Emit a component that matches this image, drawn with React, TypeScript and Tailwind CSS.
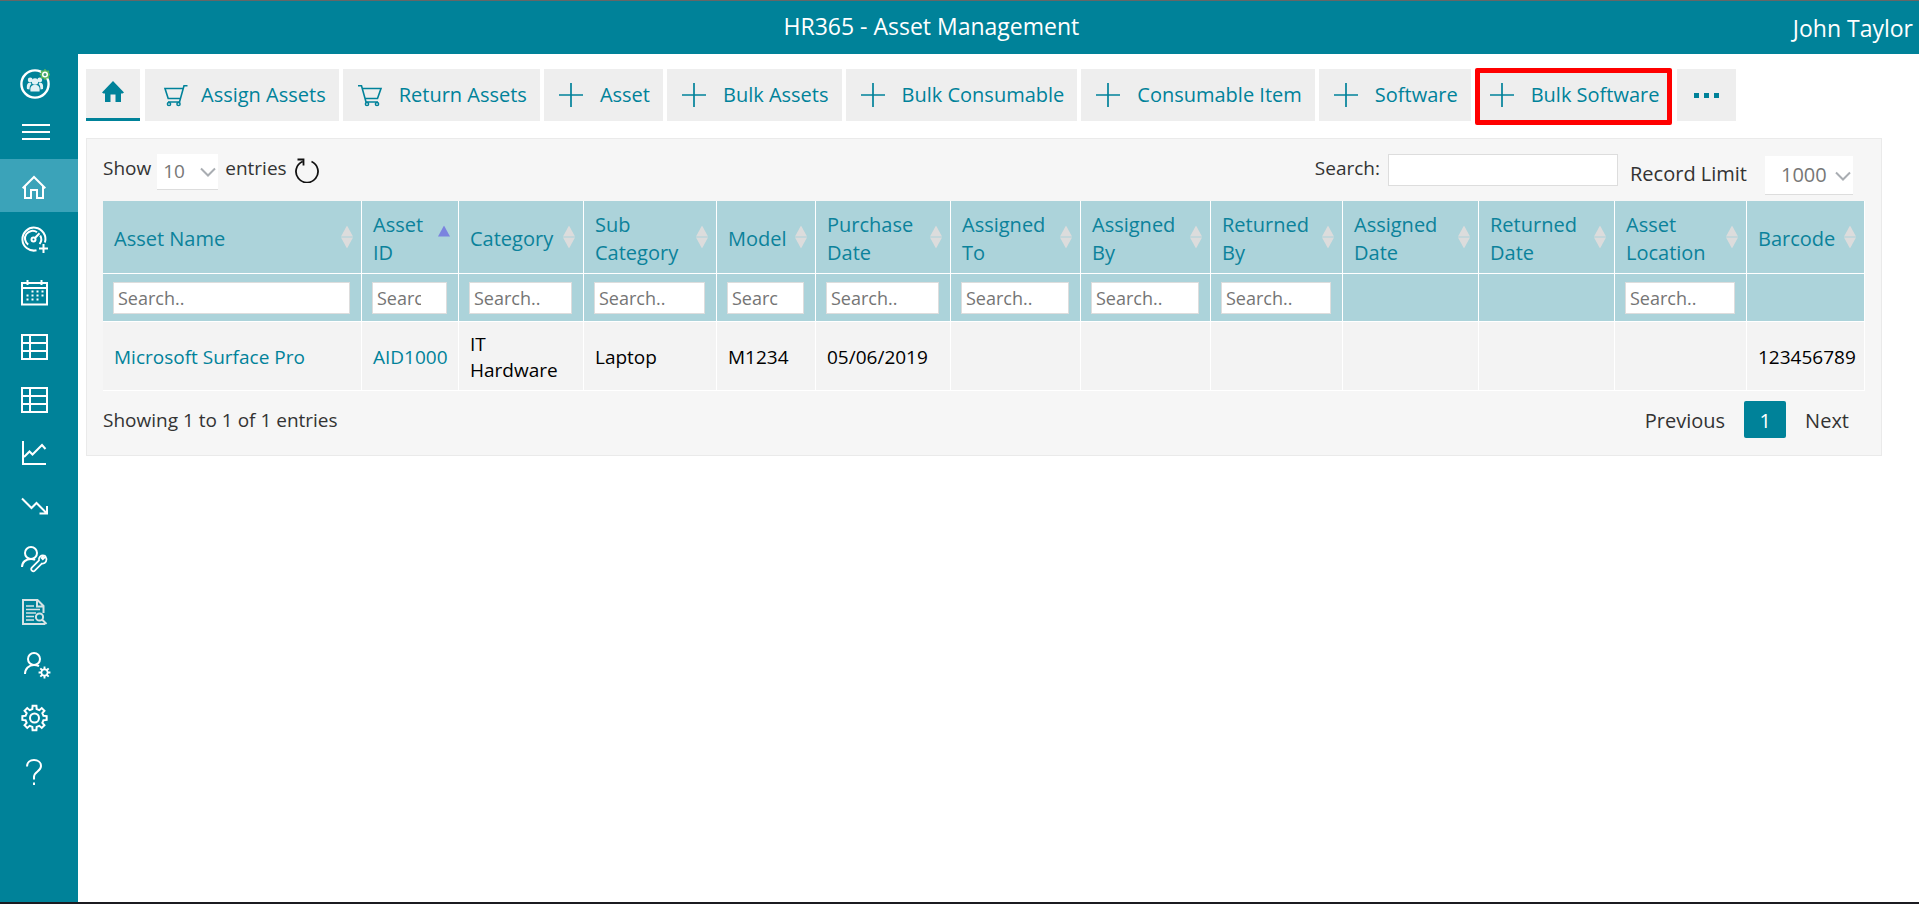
import type { ReactNode } from 'react';

function Icon({ children }: { children: ReactNode }) {
  return (
    <svg
      viewBox="0 0 28 28"
      className="block size-7 shrink-0 overflow-visible"
      fill="none"
      stroke="currentColor"
      strokeWidth="2"
      aria-hidden="true"
    >
      {children}
    </svg>
  );
}

function gearPath(cx: number, cy: number, outer: number, inner: number, teeth: number) {
  const points: string[] = [];
  const step = (Math.PI * 2) / teeth;
  for (let i = 0; i < teeth; i += 1) {
    const a = i * step - Math.PI / 2;
    const corners: [number, number][] = [
      [-0.3, inner],
      [-0.2, outer],
      [0.2, outer],
      [0.3, inner],
    ];
    corners.forEach(([k, r]) => {
      points.push(`${(cx + Math.cos(a + k * step) * r).toFixed(2)} ${(cy + Math.sin(a + k * step) * r).toFixed(2)}`);
    });
  }
  return `M${points.join('L')}Z`;
}

const gridIcon = (
  <Icon>
    <path d="M1 3H26V27H1ZM1 11H26M1 19H26M9 3V27" />
  </Icon>
);

const navItems: { label: string; icon: ReactNode }[] = [
  {
    label: 'Home',
    icon: (
      <Icon>
        <path d="M1.7 15.2L13 4L24.3 15.2M4 13.5V25H10V17H16V25H22V13.5" />
      </Icon>
    ),
  },
  {
    label: 'Add dashboard',
    icon: (
      <Icon>
        <path d="M15.5 24.3A11.5 11.5 0 1 1 23.9 16.5" />
        <path d="M7.2 18.6A7.6 7.6 0 0 1 16 6.2M19.2 9.5A7.6 7.6 0 0 1 18.6 18" />
        <circle cx="12.5" cy="13.5" r="2" />
        <path d="M14 12L18.5 7.3M22.5 18V27M18 22.5H27" />
      </Icon>
    ),
  },
  {
    label: 'Calendar',
    icon: (
      <Icon>
        <path d="M1 4H26V25.5H1ZM1 9H26M6.5 1V6M20.5 1V6" />
        <path strokeDasharray="2 3" d="M10.5 12.500H22.5M5.5 16.500H22.5M5.5 20.500H19" />
      </Icon>
    ),
  },
  { label: 'Assets', icon: gridIcon },
  { label: 'Consumables', icon: gridIcon },
  {
    label: 'Reports',
    icon: (
      <Icon>
        <path d="M2 3V26H25" />
        <path d="M3 19L8.5 13.5L11.5 16.5L21 7L24.5 11" />
      </Icon>
    ),
  },
  {
    label: 'Depreciation',
    icon: (
      <Icon>
        <path d="M1 7.5L10.5 17L15.5 12L25.5 22M18.5 22.5H26V15" />
      </Icon>
    ),
  },
  {
    label: 'Maintenance',
    icon: (
      <Icon>
        <circle cx="10" cy="9" r="6" />
        <path d="M1 23C1 18 5 15 10 15C11.5 15 13 15.3 14 16" />
        <path
          strokeWidth="1.7"
          d="M24.5 12.6L21.8 15.2L20.6 14L23 11.5C19.8 10.9 17.3 13.2 18 16.4L10.8 23.6C9 25.7 11.8 28.5 13.8 26.7L21 19.5C24.6 20 26.9 16 24.5 12.6Z"
        />
      </Icon>
    ),
  },
  {
    label: 'Audit log',
    icon: (
      <Icon>
        <g stroke="#d6e3e5">
          <path d="M22.5 16V9L16.5 3H2V27H24M16 3V9.5H22.5" />
          <path strokeWidth="1.6" d="M5 9H13M5 12.5H19M5 16H15M5 19.5H13M5 23H13" />
          <circle cx="18.5" cy="20" r="3.6" />
          <path d="M21 22.5L25.5 27" />
        </g>
      </Icon>
    ),
  },
  {
    label: 'User settings',
    icon: (
      <Icon>
        <circle cx="13" cy="9" r="6" />
        <path d="M4 24C4 18.5 8 15 13 15C15 15 16.5 15.4 18 16.2" />
        <path fill="currentColor" stroke="none" d={gearPath(23.5, 22.5, 6, 4, 8)} />
        <circle cx="23.5" cy="22.5" r="2.2" fill="#008299" stroke="none" />
      </Icon>
    ),
  },
  {
    label: 'Settings',
    icon: (
      <Icon>
        <path d={gearPath(13.5, 15, 12.3, 9.2, 8)} />
        <circle cx="13.5" cy="15" r="4.5" />
      </Icon>
    ),
  },
  {
    label: 'Help',
    icon: (
      <Icon>
        <path d="M6 10.5C6 6.5 9 4 13 4C17 4 20 6.5 20 10C20 15.5 13 15.5 13 21V23.5M13 26.5V29" />
      </Icon>
    ),
  },
];

const plusIcon = (
  <Icon>
    <path strokeWidth="1.7" d="M12 2V26M0 14H24" />
  </Icon>
);

const actions: { label: string; icon: ReactNode; highlighted?: boolean }[] = [
  {
    label: 'Assign Assets',
    icon: (
      <Icon>
        <path strokeWidth="1.6" d="M27.5 4.8H24L19.5 21H8M23 7.5H5L8.2 17.5H20.2" />
        <circle cx="9" cy="23" r="1.6" strokeWidth="1.5" />
        <circle cx="18.5" cy="23" r="1.6" strokeWidth="1.5" />
      </Icon>
    ),
  },
  {
    label: 'Return Assets',
    icon: (
      <Icon>
        <path strokeWidth="1.6" d="M0 4.8H3.5L8 21H20M4.5 7.5H23L19.5 17.5H7.2" />
        <circle cx="9" cy="23" r="1.6" strokeWidth="1.5" />
        <circle cx="19" cy="23" r="1.6" strokeWidth="1.5" />
      </Icon>
    ),
  },
  { label: 'Asset', icon: plusIcon },
  { label: 'Bulk Assets', icon: plusIcon },
  { label: 'Bulk Consumable', icon: plusIcon },
  { label: 'Consumable Item', icon: plusIcon },
  { label: 'Software', icon: plusIcon },
  { label: 'Bulk Software', icon: plusIcon, highlighted: true },
];

type Column = { title: string; col: string; filter: boolean; value: string; link?: boolean; sorted?: boolean };

const columns: Column[] = [
  { title: 'Asset Name', col: 'w-[259px]', filter: true, value: 'Microsoft Surface Pro', link: true },
  { title: 'Asset ID', col: 'w-[97px]', filter: true, value: 'AID1000', link: true, sorted: true },
  { title: 'Category', col: 'w-[125px]', filter: true, value: 'IT\nHardware' },
  { title: 'Sub Category', col: 'w-[133px]', filter: true, value: 'Laptop' },
  { title: 'Model', col: 'w-[99px]', filter: true, value: 'M1234' },
  { title: 'Purchase Date', col: 'w-[135px]', filter: true, value: '05/06/2019' },
  { title: 'Assigned To', col: 'w-[130px]', filter: true, value: '' },
  { title: 'Assigned By', col: 'w-[130px]', filter: true, value: '' },
  { title: 'Returned By', col: 'w-[132px]', filter: true, value: '' },
  { title: 'Assigned Date', col: 'w-[136px]', filter: false, value: '' },
  { title: 'Returned Date', col: 'w-[136px]', filter: false, value: '' },
  { title: 'Asset Location', col: 'w-[132px]', filter: true, value: '' },
  { title: 'Barcode', col: 'w-[118px]', filter: false, value: '123456789' },
];

function SortMark({ sorted }: { sorted?: boolean }) {
  return (
    <svg
      viewBox="0 0 12 23"
      className="absolute top-1/2 right-2 h-[23px] w-3 -translate-y-1/2"
      aria-hidden="true"
    >
      <path d="M6 0L12 11H0Z" fill={sorted ? '#7b83df' : '#dcdcdc'} />
      {!sorted && <path d="M0 12H12L6 23Z" fill="#dcdcdc" />}
    </svg>
  );
}

function Chevron() {
  return (
    <svg
      viewBox="0 0 16 10"
      className="pointer-events-none absolute top-1/2 right-0.5 h-2.5 w-4 -translate-y-1/2"
      fill="none"
      stroke="#a9adb2"
      strokeWidth="2"
      aria-hidden="true"
    >
      <path d="M1 1.5L8 8.5L15 1.5" />
    </svg>
  );
}

function Logo() {
  return (
    <svg viewBox="0 0 30 30" className="size-[30px]" aria-hidden="true">
      <circle cx="15" cy="15" r="13.6" fill="none" stroke="#fff" strokeWidth="2.4" />
      <g fill="#e3f2f5">
        <circle cx="15" cy="12.5" r="3.2" />
        <circle cx="10.2" cy="11" r="2.4" />
        <circle cx="19.8" cy="11" r="2.4" />
        <path d="M10.5 22.5C9.800 17.500 11.500 15.900 15 15.900C18.500 15.900 20.200 17.500 19.500 22.500Z" />
        <path d="M7 20C6.400 15.500 7.500 13.700 10.500 13.800L11.500 15.100C9.800 16.300 9.500 18.500 9.500 20.500ZM23 20C23.600 15.500 22.500 13.700 19.500 13.800L18.500 15.100C20.200 16.300 20.500 18.500 20.500 20.500Z" />
      </g>
      <path d={gearPath(25, 5.5, 5.4, 4.4, 8)} fill="#5cb85c" />
      <circle cx="25" cy="5.5" r="2.3" fill="#3f9f78" stroke="#fff" strokeWidth="1.5" />
    </svg>
  );
}

export default function App() {
  return (
    <div className="flex min-h-screen flex-col border-t border-b-2 border-t-[#666] border-b-[#1b1b20] bg-white font-['Open_Sans','Noto_Sans',sans-serif] text-[19px] text-[#333]">
      <header className="flex h-[53px] shrink-0 items-start bg-[#008299] text-[23px] leading-[30px] text-white">
        <div className="w-[78px]" />
        <h1 className="flex-1 pt-2.5 text-center">HR365 - Asset Management</h1>
        <div className="pt-3 pr-1.5 pl-2">John Taylor</div>
      </header>

      <div className="flex flex-1">
        <nav className="w-[78px] shrink-0 bg-[#008299] text-white" aria-label="Main">
          <a href="#" className="block pt-[15px] pl-5" aria-label="HR365">
            <Logo />
          </a>
          <button type="button" className="mt-[25px] mb-[19px] ml-[22px] flex flex-col gap-[5px]" aria-label="Toggle menu">
            <span className="h-0.5 w-7 bg-white" />
            <span className="h-0.5 w-7 bg-white" />
            <span className="h-0.5 w-7 bg-white" />
          </button>
          <ul>
            {navItems.map((item, i) => (
              <li key={item.label}>
                <a
                  href="#"
                  aria-label={item.label}
                  className={`flex h-[53px] items-end pb-[11px] pl-[21px] ${i === 0 ? 'bg-[#3ba3b9]' : ''}`}
                >
                  {item.icon}
                </a>
              </li>
            ))}
          </ul>
        </nav>

        <main className="min-w-0 flex-1 pt-[15px] pl-2">
          <div className="flex gap-1 text-[20px] text-[#00829a]">
            <button
              type="button"
              aria-label="Home"
              className="mr-px flex h-[52px] w-[54px] justify-center border-b-[3px] border-[#008299] bg-[#eee] pt-3"
            >
              <svg viewBox="0 0 22 22" className="size-[22px]" fill="#008299" aria-hidden="true">
                <path d="M11 0L22 11.500L20.500 12.500H19V21H13.500V13.500H8.500V21H3V12.500H1.500L0 11.500Z" />
              </svg>
            </button>
            {actions.map((a) => (
              <button
                key={a.label}
                type="button"
                className="relative flex h-[52px] items-center gap-[13px] bg-[#eee] pr-[13px] pl-[15px] whitespace-nowrap"
              >
                {a.icon}
                <span>{a.label}</span>
                {a.highlighted && (
                  <span className="absolute inset-x-0 -top-px -bottom-1 rounded-xs border-[5px] border-[#f00]" />
                )}
              </button>
            ))}
            <button type="button" aria-label="More" className="ml-px flex h-[52px] w-[59px] items-center justify-center gap-[5px] bg-[#eee]">
              <span className="size-[5px] bg-[#008299]" />
              <span className="size-[5px] bg-[#008299]" />
              <span className="size-[5px] bg-[#008299]" />
            </button>
          </div>

          <section className="mt-[17px] mr-[37px] border border-[#eaeaea] bg-[#f6f6f6] px-4 pb-[17px]">
            <div className="flex h-[62px] items-start justify-between pt-[15px]">
              <div className="flex items-start">
                <label htmlFor="page-size" className="mr-1.5 leading-7">
                  Show
                </label>
                <div className="relative">
                  <select
                    id="page-size"
                    className="h-9 w-[61px] appearance-none border-b border-[#ddd] bg-white pl-1.5 text-[#777]"
                  >
                    <option>10</option>
                  </select>
                  <Chevron />
                </div>
                <span className="ml-[7px] leading-7">entries</span>
                <button type="button" aria-label="Refresh" className="mt-[3px] ml-2">
                  <svg viewBox="0 0 24 26" className="h-[26px] w-6" fill="none" stroke="#111" strokeWidth="1.8" aria-hidden="true">
                    <path d="M7.500 4.500A11 11 0 1 0 16.500 4.500M2.500 2.500H8.500V8.500" />
                  </svg>
                </button>
              </div>
              <div className="flex items-start">
                <label htmlFor="search" className="mr-2 leading-7">
                  Search:
                </label>
                <input id="search" type="text" className="h-8 w-[230px] border border-[#ddd] bg-white px-1" />
                <label htmlFor="limit" className="mr-[18px] ml-3 pt-1 text-[20px] leading-8">
                  Record Limit
                </label>
                <div className="relative mt-0.5 mr-3">
                  <select
                    id="limit"
                    className="h-[39px] w-[88px] appearance-none border-b border-[#ddd] bg-white pl-4 text-[20px] text-[#777]"
                  >
                    <option>1000</option>
                  </select>
                  <Chevron />
                </div>
              </div>
            </div>

            <table className="w-full table-fixed border-separate border-spacing-0 text-left">
              <colgroup>
                {columns.map((c) => (
                  <col key={c.title} className={c.col} />
                ))}
              </colgroup>
              <thead className="bg-[#acd3da] text-[#0b829b]">
                <tr>
                  {columns.map((c) => (
                    <th
                      key={c.title}
                      scope="col"
                      className="relative h-[73px] border-r border-b border-white pt-1 pr-6 pl-[11px] text-[20px] leading-7 font-normal"
                    >
                      {c.title}
                      <SortMark sorted={c.sorted} />
                    </th>
                  ))}
                </tr>
                <tr>
                  {columns.map((c) => (
                    <td key={c.title} className="h-12 border-r border-b border-white py-0 pr-[11px] pl-2.5">
                      {c.filter && (
                        <input
                          type="text"
                          placeholder="Search.."
                          aria-label={`Filter ${c.title}`}
                          className="block h-8 w-full border border-[#ddd] bg-white pr-[25px] pl-1 text-[18px] placeholder:text-[#757575]"
                        />
                      )}
                    </td>
                  ))}
                </tr>
              </thead>
              <tbody className="bg-[#f3f3f3] text-black">
                <tr>
                  {columns.map((c) => (
                    <td key={c.title} className="h-[69px] border-r border-b border-white pt-0.5 pl-[11px] leading-[26px] whitespace-pre-line">
                      {c.link ? (
                        <a href="#" className="whitespace-nowrap text-[#00829a]">
                          {c.value}
                        </a>
                      ) : (
                        c.value
                      )}
                    </td>
                  ))}
                </tr>
              </tbody>
            </table>

            <div className="flex items-start justify-between pt-2.5">
              <p className="pt-1 leading-[30px]">Showing 1 to 1 of 1 entries</p>
              <div className="flex items-center gap-[19px] pr-4 text-[20px]">
                <button type="button" className="pt-0.5">Previous</button>
                <button type="button" className="h-[37px] w-[42px] rounded-xs bg-[#008299] pt-0.5 text-white">
                  1
                </button>
                <button type="button" className="pt-0.5">Next</button>
              </div>
            </div>
          </section>
        </main>
      </div>
    </div>
  );
}
